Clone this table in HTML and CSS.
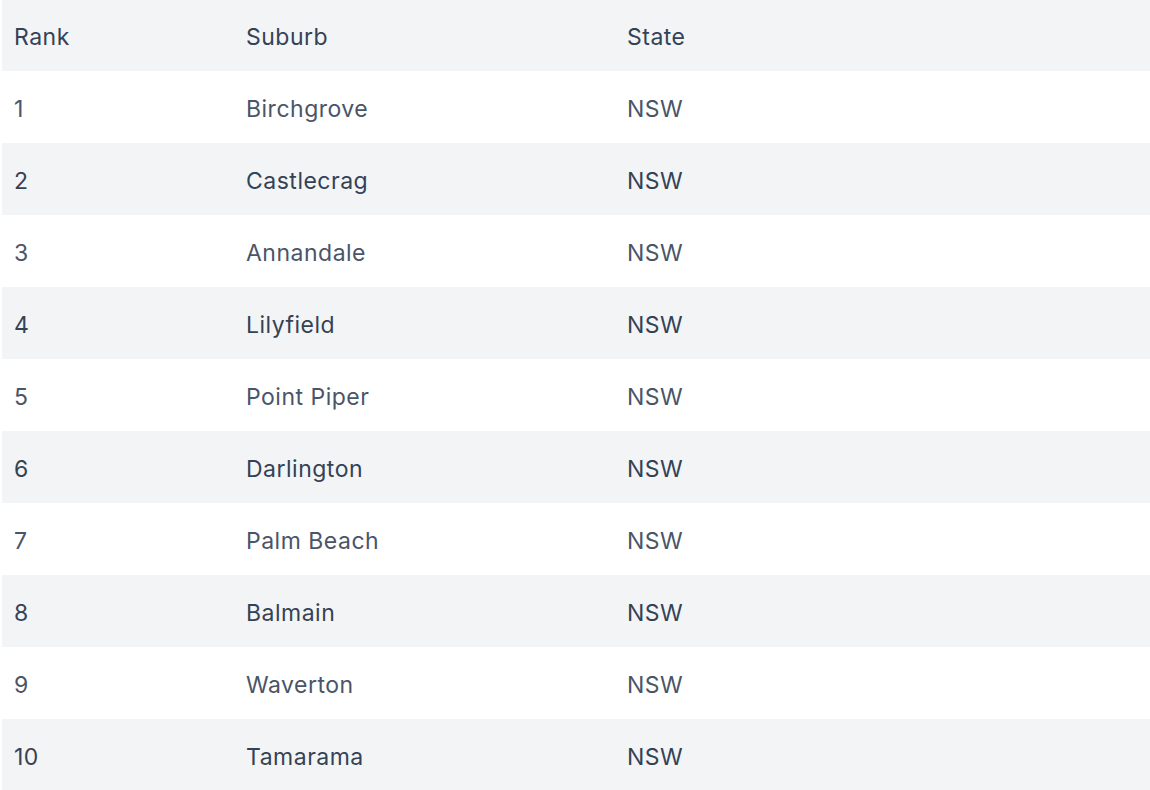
FILE: index.html
```html
<!DOCTYPE html>
<html lang="en">
<head>
<meta charset="utf-8">
<title>Top Suburbs</title>
<link rel="stylesheet" href="styles.css">
</head>
<body>
<div class="wrap">
<table class="rank-table">
  <colgroup>
    <col class="c-rank">
    <col class="c-suburb">
    <col class="c-state">
  </colgroup>
  <thead>
    <tr><th>Rank</th><th>Suburb</th><th>State</th></tr>
  </thead>
  <tbody>
    <tr><td>1</td><td>Birchgrove</td><td>NSW</td></tr>
    <tr><td>2</td><td>Castlecrag</td><td>NSW</td></tr>
    <tr><td>3</td><td>Annandale</td><td>NSW</td></tr>
    <tr><td>4</td><td>Lilyfield</td><td>NSW</td></tr>
    <tr><td>5</td><td>Point Piper</td><td>NSW</td></tr>
    <tr><td>6</td><td>Darlington</td><td>NSW</td></tr>
    <tr><td>7</td><td>Palm Beach</td><td>NSW</td></tr>
    <tr><td>8</td><td>Balmain</td><td>NSW</td></tr>
    <tr><td>9</td><td>Waverton</td><td>NSW</td></tr>
    <tr><td>10</td><td>Tamarama</td><td>NSW</td></tr>
  </tbody>
</table>
</div>
</body>
</html>
```
FILE: styles.css
```css
html, body {
  margin: 0;
  padding: 0;
  background: #ffffff;
}
.wrap {
  padding-left: 2px;
  margin-top: -1px;
}
.rank-table {
  width: 1148px;
  border-collapse: collapse;
  table-layout: fixed;
  font-family: Inter, "Noto Sans", sans-serif;
  font-size: 23px;
  letter-spacing: 0.5px;
  text-align: left;
}
.c-rank { width: 232px; }
.c-suburb { width: 381px; }
.rank-table th,
.rank-table td {
  padding: 3px 12px 0;
  height: 72px;
  box-sizing: border-box;
  font-weight: 400;
  vertical-align: middle;
}
.rank-table thead tr {
  background: #f3f4f6;
  color: #344256;
}
.rank-table tbody tr:nth-child(odd) {
  background: #ffffff;
  color: #4a5568;
}
.rank-table tbody tr:nth-child(even) {
  background: #f3f4f6;
  color: #344256;
}
```
